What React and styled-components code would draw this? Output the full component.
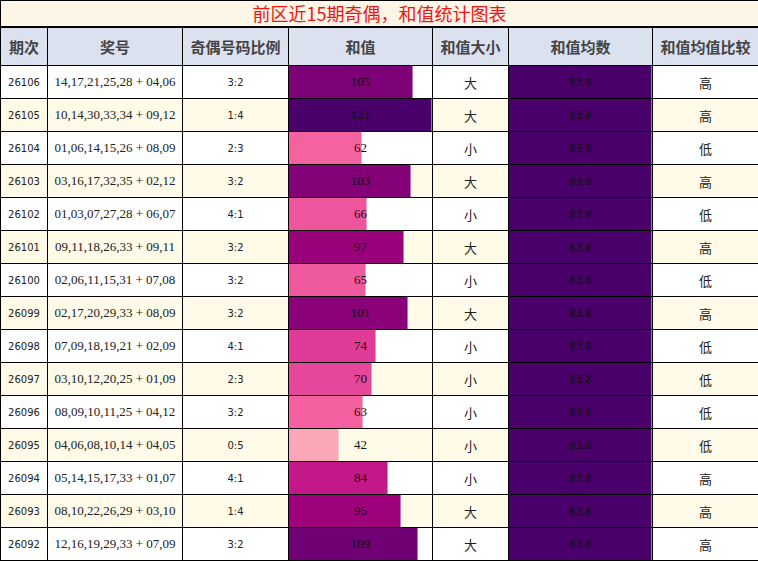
import React from "react";
import styled, { createGlobalStyle } from "styled-components";

const GlobalStyle = createGlobalStyle`
  html, body { margin: 0; padding: 0; background: #fff; }
  body { font-family: "Noto Sans CJK SC", "DejaVu Sans", sans-serif; }
`;

const rows = [
  ["26106", "14,17,21,25,28 + 04,06", "3:2", 105, "大", "高"],
  ["26105", "10,14,30,33,34 + 09,12", "1:4", 121, "大", "高"],
  ["26104", "01,06,14,15,26 + 08,09", "2:3", 62, "小", "低"],
  ["26103", "03,16,17,32,35 + 02,12", "3:2", 103, "大", "高"],
  ["26102", "01,03,07,27,28 + 06,07", "4:1", 66, "小", "低"],
  ["26101", "09,11,18,26,33 + 09,11", "3:2", 97, "大", "高"],
  ["26100", "02,06,11,15,31 + 07,08", "3:2", 65, "小", "低"],
  ["26099", "02,17,20,29,33 + 08,09", "3:2", 101, "大", "高"],
  ["26098", "07,09,18,19,21 + 02,09", "4:1", 74, "小", "低"],
  ["26097", "03,10,12,20,25 + 01,09", "2:3", 70, "小", "低"],
  ["26096", "08,09,10,11,25 + 04,12", "3:2", 63, "小", "低"],
  ["26095", "04,06,08,10,14 + 04,05", "0:5", 42, "小", "低"],
  ["26094", "05,14,15,17,33 + 01,07", "4:1", 84, "小", "高"],
  ["26093", "08,10,22,26,29 + 03,10", "1:4", 95, "大", "高"],
  ["26092", "12,16,19,29,33 + 07,09", "3:2", 109, "大", "高"],
];

const AVG = 83.8;
const MAX = 121;

const RDPU = ["#fff7f3", "#fde0dd", "#fcc5c0", "#fa9fb5", "#f768a1", "#dd3497", "#ae017e", "#7a0177", "#49006a"];
const hex = (h) => [1, 3, 5].map((i) => parseInt(h.slice(i, i + 2), 16));
function rdpu(t) {
  const x = Math.max(0, Math.min(1, t)) * (RDPU.length - 1);
  const i = Math.min(Math.floor(x), RDPU.length - 2);
  const f = x - i;
  const a = hex(RDPU[i]);
  const b = hex(RDPU[i + 1]);
  return a.map((v, k) => Math.round(v + (b[k] - v) * f));
}
const rgb = (c) => `rgb(${c[0]},${c[1]},${c[2]})`;
const lighter = (c) => rgb(c.map((v) => Math.round(v + (255 - v) * 0.45)));

function barBg(pct, c) {
  return `linear-gradient(to right, ${rgb(c)} calc(${pct}% - 1px), ${lighter(c)} calc(${pct}% - 1px), ${lighter(c)} ${pct}%, transparent ${pct}%)`;
}

const Table = styled.table`
  border-collapse: separate;
  border-spacing: 0;
  table-layout: fixed;
  width: 758px;
  border-left: 1px solid #000;
  border-top: 1px solid #000;
`;

const Cell = styled.td`
  border-right: 1px solid #000;
  border-bottom: 1px solid #000;
  padding: 0;
  text-align: center;
  vertical-align: middle;
  box-sizing: border-box;
`;

const TitleCell = styled(Cell)`
  height: 27px;
  border-bottom-width: 2px;
  background: #fdf5e6;
  color: #f01414;
  font-family: "Noto Sans CJK SC", sans-serif;
  font-size: 18px;
  line-height: 25px;
`;

const HeadCell = styled.th`
  border-right: 1px solid #000;
  border-bottom: 1px solid #000;
  padding: 0;
  box-sizing: border-box;
  height: 38px;
  background: #dce1f0;
  color: #444;
  font-family: "Noto Sans CJK SC", sans-serif;
  font-weight: 700;
  font-size: 15px;
  text-align: center;
  vertical-align: middle;
`;

const Row = styled.tr`
  background: ${(p) => (p.$alt ? "#fffbe8" : "#fff")};
`;

const DataCell = styled(Cell)`
  height: 33px;
  color: #222;
  font-size: ${(p) => (p.$kind === "cjk" ? "13px" : p.$kind === "serif" ? "13px" : "10px")};
  font-family: ${(p) =>
    p.$kind === "cjk"
      ? `"Noto Sans CJK SC", sans-serif`
      : p.$kind === "serif"
      ? `"Liberation Serif", serif`
      : `"DejaVu Sans", sans-serif`};
`;

const BarCell = styled(Cell)`
  height: 33px;
  color: #111;
  font-family: ${(p) => (p.$serif ? `"Liberation Serif", serif` : `"DejaVu Sans", sans-serif`)};
  font-size: ${(p) => (p.$serif ? "13px" : "10px")};
  background-repeat: no-repeat;
`;

const Col = styled.col`
  width: ${(p) => p.$w}px;
`;

const widths = [47, 135, 106, 144, 76, 144, 106];
const heads = ["期次", "奖号", "奇偶号码比例", "和值", "和值大小", "和值均数", "和值均值比较"];

export default function App() {
  const avgColor = rdpu(1);
  return (
    <>
      <GlobalStyle />
      <Table>
        <colgroup>
          {widths.map((w, i) => (
            <Col key={i} $w={w} />
          ))}
        </colgroup>
        <thead>
          <tr>
            <TitleCell colSpan={7}>前区近15期奇偶，和值统计图表</TitleCell>
          </tr>
          <tr>
            {heads.map((h) => (
              <HeadCell key={h}>{h}</HeadCell>
            ))}
          </tr>
        </thead>
        <tbody>
          {rows.map((r, i) => {
            const pct = (r[3] / MAX) * 100;
            const c = rdpu(r[3] / MAX);
            return (
              <Row key={r[0]} $alt={i % 2 === 1}>
                <DataCell $kind="sans">{r[0]}</DataCell>
                <DataCell $kind="serif">{r[1]}</DataCell>
                <DataCell $kind="sans">{r[2]}</DataCell>
                <BarCell $serif style={{ backgroundImage: barBg(pct, c) }}>
                  {r[3]}
                </BarCell>
                <DataCell $kind="cjk">{r[4]}</DataCell>
                <BarCell style={{ backgroundImage: barBg(100, avgColor) }}>{AVG}</BarCell>
                <DataCell $kind="cjk">{r[5]}</DataCell>
              </Row>
            );
          })}
        </tbody>
      </Table>
    </>
  );
}
